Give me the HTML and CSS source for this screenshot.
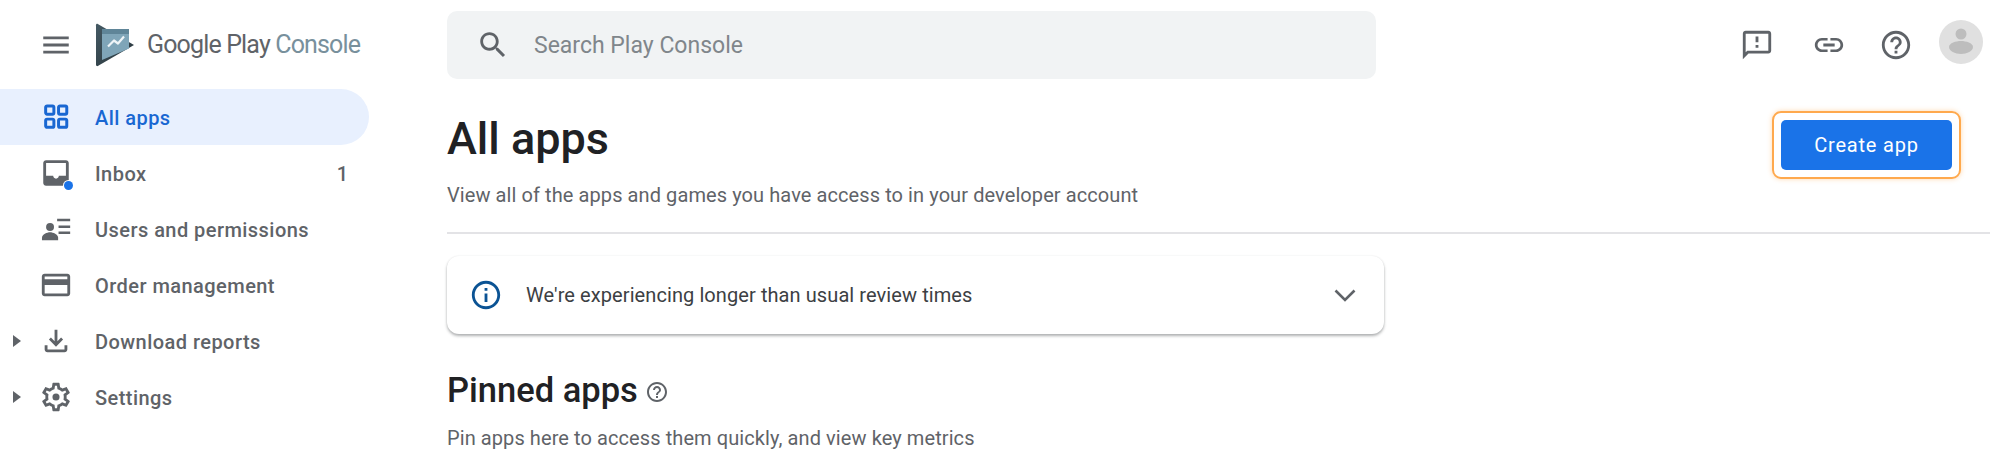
FILE: index.html
```html
<!DOCTYPE html>
<html lang="en">
<head>
<meta charset="utf-8">
<title>All apps - Google Play Console</title>
<link rel="stylesheet" href="styles.css">
</head>
<body>
<div class="app">
  <aside class="sidebar">
    <div class="brand">
      <svg class="icon" viewBox="0 0 24 24"><path d="M3 18h18v-2H3v2zm0-5h18v-2H3v2zm0-7v2h18V6H3z"/></svg>
      <svg class="logo" viewBox="0 0 40 44">
        <defs>
          <linearGradient id="logoDark" x1="0" y1="0" x2="1" y2="1"><stop offset="0" stop-color="#455a64"/><stop offset="1" stop-color="#263238"/></linearGradient>
        </defs>
        <path d="M1 2.2C1 1 2 .6 2.8 1L39 22 2.8 43C2 43.400 1 43 1 41.800z" fill="url(#logoDark)"/>
        <path d="M7 6h27v19.500L7 37z" fill="#7fa5b8"/>
        <path d="M7 6h27v5H7z" fill="#5f8598"/>
        <path d="M13 23.500l6-6 4 3 6-7" fill="none" stroke="#eef4f7" stroke-width="2.200" stroke-linejoin="round"/>
      </svg>
      <span class="wordmark">Google Play <span class="wordmark-accent">Console</span></span>
    </div>
    <nav class="nav">
      <a class="nav-item nav-item-active">
        <span class="caret-slot"></span>
        <svg class="icon" viewBox="0 0 24 24"><g fill="none" stroke="currentColor" stroke-width="2.100"><rect x="4.700" y="4.200" width="5.800" height="5.800" rx="1"/><rect x="13.800" y="4.200" width="5.800" height="5.800" rx="1"/><rect x="4.700" y="13.500" width="5.800" height="5.800" rx="1"/><rect x="13.800" y="13.500" width="5.800" height="5.800" rx="1"/></g></svg>
        <span class="nav-label">All apps</span>
      </a>
      <a class="nav-item">
        <span class="caret-slot"></span>
        <span class="icon-wrap">
          <svg class="icon" viewBox="0 0 24 24"><path d="M19 3H5c-1.100 0-2 .9-2 2v14c0 1.100.9 2 2 2h14c1.100 0 2-.9 2-2V5c0-1.100-.9-2-2-2zm0 11h-4.990c0 1.100-.9 2-2 2s-2-.9-2-2H5V5h14v9z"/></svg>
          <span class="dot"></span>
        </span>
        <span class="nav-label">Inbox</span>
        <span class="nav-count">1</span>
      </a>
      <a class="nav-item">
        <span class="caret-slot"></span>
        <svg class="icon" viewBox="0 0 24 24"><circle cx="7.800" cy="10.600" r="2.800"/><path d="M2.100 20v-1.800c0-2.400 3.600-3.900 5.700-3.900s5.700 1.500 5.700 3.900V20z"/><path d="M12.800 4.800H22v1.700h-9.200zM13.800 9.600H22v1.700h-8.200zM13.800 13.800H22v1.700h-8.200z"/></svg>
        <span class="nav-label">Users and permissions</span>
      </a>
      <a class="nav-item">
        <span class="caret-slot"></span>
        <svg class="icon" viewBox="0 0 24 24"><path d="M20 4H4c-1.110 0-1.990.89-1.990 2L2 18c0 1.110.89 2 2 2h16c1.110 0 2-.89 2-2V6c0-1.110-.89-2-2-2zm0 14H4v-6h16v6zm0-10H4V6h16v2z"/></svg>
        <span class="nav-label">Order management</span>
      </a>
      <a class="nav-item">
        <span class="caret-slot"><svg class="caret" viewBox="0 0 8 12"><path d="M0 0l8 6-8 6z"/></svg></span>
        <svg class="icon" viewBox="0 0 24 24"><path d="M18 15v3H6v-3H4v3c0 1.100.9 2 2 2h12c1.100 0 2-.9 2-2v-3h-2zm-1-4l-1.410-1.410L13 12.170V4h-2v8.170L8.410 9.590 7 11l5 5 5-5z"/></svg>
        <span class="nav-label">Download reports</span>
      </a>
      <a class="nav-item">
        <span class="caret-slot"><svg class="caret" viewBox="0 0 8 12"><path d="M0 0l8 6-8 6z"/></svg></span>
        <svg class="icon" viewBox="0 0 24 24"><path d="M19.430 12.980c.04-.32.07-.64.07-.98 0-.34-.03-.66-.07-.98l2.110-1.650c.19-.15.24-.42.12-.64l-2-3.460c-.09-.16-.26-.25-.44-.25-.06 0-.12.01-.17.03l-2.490 1c-.52-.4-1.080-.73-1.690-.98l-.38-2.650C14.460 2.180 14.250 2 14 2h-4c-.25 0-.46.18-.49.42l-.38 2.650c-.61.25-1.170.59-1.690.98l-2.490-1c-.06-.02-.12-.03-.18-.03-.17 0-.34.09-.43.25l-2 3.460c-.13.22-.07.49.12.64l2.110 1.650c-.04.32-.07.65-.07.98 0 .33.03.66.07.98l-2.110 1.650c-.19.15-.24.42-.12.64l2 3.460c.09.16.26.25.44.25.06 0 .12-.01.17-.03l2.490-1c.52.4 1.080.73 1.690.98l.38 2.650c.03.24.24.42.49.42h4c.25 0 .46-.18.49-.42l.38-2.650c.61-.25 1.170-.59 1.690-.98l2.490 1c.06.02.12.03.18.03.17 0 .34-.09.43-.25l2-3.460c.12-.22.07-.49-.12-.64l-2.110-1.650zm-1.980-1.710c.04.31.05.52.05.73 0 .21-.02.43-.05.73l-.14 1.130.89.7 1.080.84-.7 1.210-1.270-.51-1.040-.42-.9.68c-.43.32-.84.56-1.250.73l-1.060.43-.16 1.130-.2 1.350h-1.400l-.19-1.350-.16-1.130-1.060-.43c-.43-.18-.83-.41-1.230-.71l-.91-.7-1.060.43-1.270.51-.7-1.210 1.080-.84.89-.7-.14-1.130c-.03-.31-.05-.54-.05-.74s.02-.43.05-.73l.14-1.130-.89-.7-1.080-.84.7-1.210 1.270.51 1.040.42.9-.68c.43-.32.84-.56 1.250-.73l1.060-.43.16-1.130.2-1.350h1.390l.19 1.350.16 1.130 1.060.43c.43.18.83.41 1.230.71l.91.7 1.060-.43 1.270-.51.7 1.210-1.070.85-.89.7.14 1.130z"/><circle cx="12" cy="12" r="2.500"/></svg>
        <span class="nav-label">Settings</span>
      </a>
    </nav>
  </aside>

  <main class="main">
    <header class="topbar">
      <div class="search">
        <svg class="icon search-icon" viewBox="0 0 24 24"><path d="M15.500 14h-.79l-.28-.27C15.410 12.590 16 11.110 16 9.500 16 5.910 13.090 3 9.500 3S3 5.910 3 9.500 5.910 16 9.500 16c1.610 0 3.090-.59 4.230-1.570l.27.28v.79l5 4.990L20.490 19l-4.990-5zm-6 0C7.010 14 5 11.990 5 9.500S7.010 5 9.500 5 14 7.010 14 9.500 11.990 14 9.500 14z"/></svg>
        <span class="search-text">Search Play Console</span>
      </div>
      <div class="top-actions">
        <svg class="icon" viewBox="0 0 24 24"><path d="M20 2H4c-1.100 0-1.990.9-1.990 2L2 22l4-4h14c1.100 0 2-.9 2-2V4c0-1.100-.9-2-2-2zm0 14H5.170L4 17.170V4h16v12zm-9-4h2v2h-2zm0-6h2v4h-2z"/></svg>
        <svg class="icon action-link" viewBox="0 0 24 24"><path d="M3.900 12c0-1.710 1.390-3.100 3.100-3.100h4V7H7c-2.760 0-5 2.240-5 5s2.240 5 5 5h4v-1.900H7c-1.710 0-3.100-1.390-3.100-3.100zM8 13h8v-2H8v2zm9-6h-4v1.900h4c1.710 0 3.100 1.390 3.100 3.100s-1.390 3.100-3.100 3.100h-4V17h4c2.760 0 5-2.240 5-5s-2.240-5-5-5z"/></svg>
        <svg class="icon action-help" viewBox="0 0 24 24"><path d="M11 18h2v-2h-2v2zm1-16C6.480 2 2 6.480 2 12s4.480 10 10 10 10-4.480 10-10S17.520 2 12 2zm0 18c-4.410 0-8-3.590-8-8s3.590-8 8-8 8 3.590 8 8-3.590 8-8 8zm0-14c-2.210 0-4 1.790-4 4h2c0-1.100.9-2 2-2s2 .9 2 2c0 2-3 1.750-3 5h2c0-2.250 3-2.500 3-5 0-2.210-1.790-4-4-4z"/></svg>
        <span class="avatar">
          <svg viewBox="0 0 44 44"><circle cx="22" cy="14" r="5.500" fill="#bdbdbd"/><path d="M10 27c0-4 7-6 12-6s12 2 12 6c0 4-6 7-12 7s-12-3-12-7z" fill="#bdbdbd"/></svg>
        </span>
      </div>
    </header>

    <section class="page-head">
      <div>
        <h1 class="page-title">All apps</h1>
        <p class="lead lead-top">View all of the apps and games you have access to in your developer account</p>
      </div>
      <div class="focus-ring"><button class="primary">Create app</button></div>
    </section>

    <section class="notice">
      <svg class="notice-icon" viewBox="0 0 24 24"><path d="M11 7h2v2h-2zm0 4h2v6h-2zm1-9C6.480 2 2 6.480 2 12s4.480 10 10 10 10-4.480 10-10S17.520 2 12 2zm0 18c-4.410 0-8-3.590-8-8s3.590-8 8-8 8 3.590 8 8-3.590 8-8 8z"/></svg>
      <span class="notice-text">We're experiencing longer than usual review times</span>
      <svg class="chevron" viewBox="0 0 22 13"><path d="M1.500 1.500L11 11l9.500-9.500" fill="none" stroke="currentColor" stroke-width="2.600"/></svg>
    </section>

    <section class="pinned">
      <div class="pinned-head">
        <h2 class="section-title">Pinned apps</h2>
        <svg class="help-small" viewBox="0 0 24 24"><path d="M11 18h2v-2h-2v2zm1-16C6.480 2 2 6.480 2 12s4.480 10 10 10 10-4.480 10-10S17.520 2 12 2zm0 18c-4.410 0-8-3.590-8-8s3.590-8 8-8 8 3.590 8 8-3.590 8-8 8zm0-14c-2.210 0-4 1.790-4 4h2c0-1.100.9-2 2-2s2 .9 2 2c0 2-3 1.750-3 5h2c0-2.250 3-2.500 3-5 0-2.210-1.790-4-4-4z"/></svg>
      </div>
      <p class="lead lead-pinned">Pin apps here to access them quickly, and view key metrics</p>
    </section>
  </main>
</div>
</body>
</html>
```
FILE: styles.css
```css
* { box-sizing: border-box; }

html, body {
  margin: 0;
  height: 100%;
  background: #fff;
  overflow: hidden;
}

body {
  font-family: Roboto, "Liberation Sans", sans-serif;
  color: #5f6368;
}

.app {
  display: flex;
  height: 475px;
}

.icon {
  width: 34px;
  height: 34px;
  flex: none;
  fill: currentColor;
  display: block;
}

/* Sidebar */
.sidebar {
  width: 447px;
  flex: none;
}

.brand {
  height: 89px;
  padding-left: 39px;
  display: flex;
  align-items: center;
}

.logo {
  width: 40px;
  height: 44px;
  margin-left: 22px;
  flex: none;
}

.wordmark {
  margin-left: 12px;
  font-size: 25px;
  letter-spacing: -0.85px;
  white-space: nowrap;
}

.wordmark-accent { color: #78909c; }

.nav {
  width: 369px;
}

.nav-item {
  height: 56px;
  display: flex;
  align-items: center;
  border-radius: 0 28px 28px 0;
}

.nav-item-active {
  background: #e8f0fe;
  color: #1967d2;
}

.caret-slot {
  width: 39px;
  flex: none;
  padding-left: 13px;
}

.caret {
  width: 8px;
  height: 12px;
  display: block;
  fill: #5f6368;
}

.icon-wrap {
  position: relative;
  flex: none;
}

.dot {
  position: absolute;
  left: 25px;
  top: 25px;
  width: 9px;
  height: 9px;
  border-radius: 50%;
  background: #1a73e8;
  box-shadow: 0 0 0 1px #fff;
}

.nav-label {
  margin-left: 22px;
  padding-top: 2px;
  font-size: 20px;
  font-weight: 500;
  letter-spacing: .45px;
}

.nav-count {
  margin-left: auto;
  margin-right: 21px;
  padding-top: 2px;
  font-size: 20px;
  font-weight: 500;
}

/* Main */
.main {
  flex: 1;
  min-width: 0;
  padding: 11px 9px 0 0;
}

.topbar {
  display: flex;
  align-items: center;
  height: 68px;
}

.search {
  width: 929px;
  height: 68px;
  border-radius: 10px;
  background: #f1f3f4;
  display: flex;
  align-items: center;
  padding-left: 29px;
}

.search-text {
  margin-left: 24px;
  font-size: 23px;
  color: #80868b;
}

.top-actions {
  margin-left: auto;
  margin-right: 7px;
  display: flex;
  align-items: center;
}

.action-link { margin-left: 38px; }
.action-help { margin-left: 33px; }

.avatar {
  width: 44px;
  height: 44px;
  margin-left: 26px;
  margin-top: -7px;
  border-radius: 50%;
  background: #e0e0e0;
  display: block;
}

.avatar svg { display: block; }

.page-head {
  display: flex;
  justify-content: space-between;
  align-items: flex-start;
  height: 155px;
  padding-top: 32px;
  border-bottom: 2px solid #e3e3e6;
}

.page-title {
  margin: 2px 0 0;
  font-size: 45px;
  line-height: 52px;
  font-weight: 500;
  color: #202124;
}

.lead {
  margin: 0;
  font-size: 20px;
  line-height: 28px;
  letter-spacing: .085px;
  color: #5f6368;
}

.lead-top { margin-top: 16px; }

.focus-ring {
  margin-right: 29px;
  padding: 7px;
  border: 2px solid #ffa94d;
  border-radius: 9px;
  box-shadow: 0 0 5px rgba(255, 169, 77, .45);
}

.primary {
  display: block;
  width: 171px;
  height: 50px;
  border: 0;
  border-radius: 5px;
  background: #1a73e8;
  color: #fff;
  font-family: inherit;
  font-size: 20px;
  font-weight: 400;
  letter-spacing: .8px;
  padding: 0;
}

.notice {
  width: 937px;
  height: 78px;
  margin-top: 22px;
  border-radius: 12px;
  background: #fff;
  box-shadow: 0 2px 3px rgba(60, 64, 67, .4), 0 0 2px rgba(60, 64, 67, .08);
  display: flex;
  align-items: center;
  padding-left: 22px;
  padding-right: 28px;
}

.notice-icon {
  width: 34px;
  height: 34px;
  flex: none;
  fill: #0b5394;
}

.notice-text {
  margin-left: 23px;
  font-size: 20px;
  letter-spacing: .085px;
  color: #3c4043;
}

.chevron {
  width: 22px;
  height: 13px;
  margin-left: auto;
  color: #5f6368;
}

.pinned-head {
  margin-top: 35px;
  display: flex;
  align-items: center;
}

.section-title {
  margin: 0;
  font-size: 34.5px;
  line-height: 42px;
  font-weight: 500;
  color: #202124;
}

.help-small {
  width: 24px;
  height: 24px;
  margin-left: 7px;
  margin-top: 4px;
  fill: #5f6368;
}

.lead-pinned { margin-top: 13px; }
```
